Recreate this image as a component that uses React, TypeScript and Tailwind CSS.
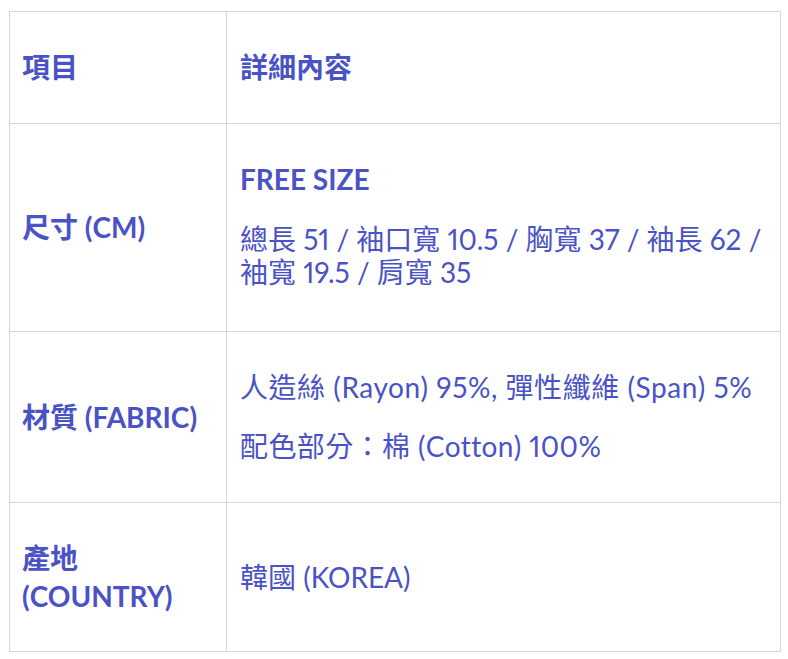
export default function App() {
  const font = { fontFamily: 'Lato, "Noto Sans CJK TC", sans-serif' };
  const left = "border border-[#d6d6d6] w-[217px] px-[12px] align-middle font-bold text-left";
  const right = "border border-[#d6d6d6] px-[13px] align-middle text-left";
  return (
    <div className="bg-white min-h-[659px] pt-[11px] pl-[9px]" style={font}>
      <table className="w-[772px] border-collapse text-[28px] leading-[33px] text-[#4a53c6] proportional-nums">
        <tbody>
          <tr>
            <td className={left + " py-[39px]"}>項目</td>
            <td className={right + " py-[39px] font-bold"}>詳細內容</td>
          </tr>
          <tr>
            <td className={left + " py-[39px]"}>尺寸 (CM)</td>
            <td className={right + " pt-[39px] pb-[42px]"}>
              <p className="mb-[27px] font-bold">FREE SIZE</p>
              <p><span className="whitespace-nowrap">總長 51 / 袖口寬 10.5 / 胸寬 37 / 袖長 62 /</span><br />袖寬 19.5 / 肩寬 35</p>
            </td>
          </tr>
          <tr>
            <td className={left + " py-[39px]"}>材質 (FABRIC)</td>
            <td className={right + " py-[39px]"}>
              <p className="mb-[26px] whitespace-nowrap tracking-[0.55px]">人造絲 (Rayon) 95%, 彈性纖維 (Span) 5%</p>
              <p className="tracking-[0.4px]">配色部分：棉 (Cotton) 100%</p>
            </td>
          </tr>
          <tr>
            <td className={left + " py-[36px] leading-[38px]"}>產地<br />(COUNTRY)</td>
            <td className={right + " py-[36px]"}>韓國 (KOREA)</td>
          </tr>
        </tbody>
      </table>
    </div>
  );
}
